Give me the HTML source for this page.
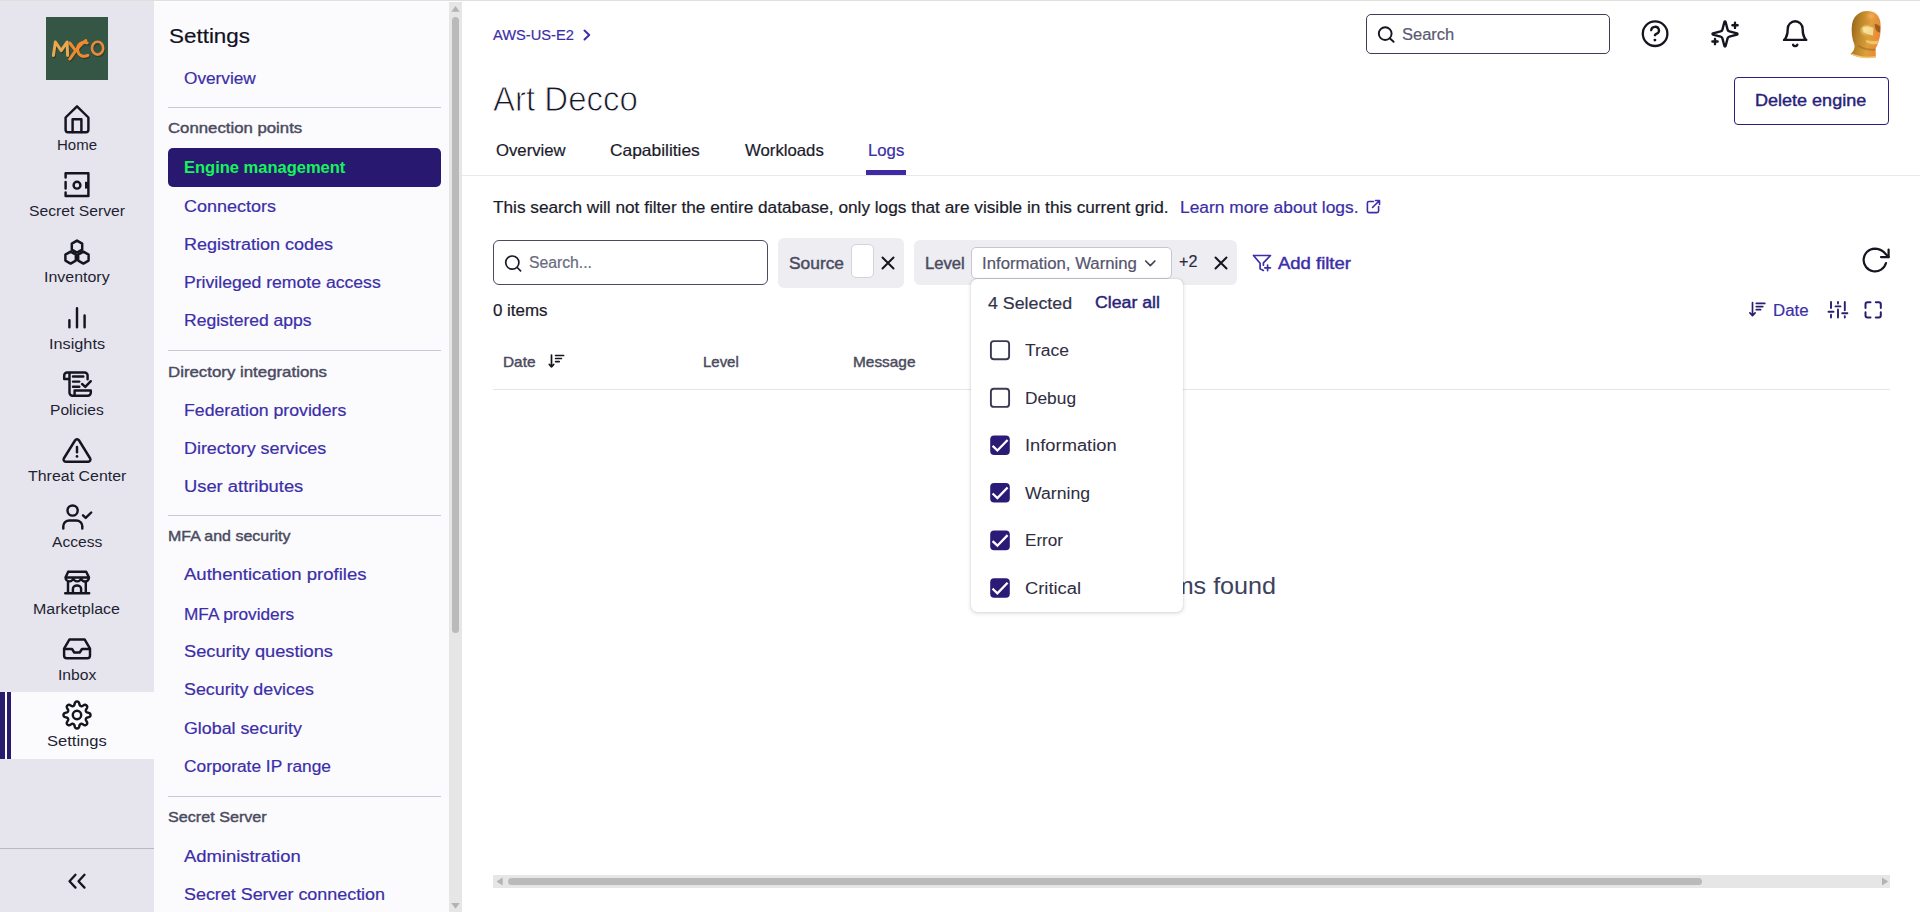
<!DOCTYPE html>
<html><head><meta charset="utf-8"><title>Art Decco - Logs</title>
<style>
html,body{margin:0;padding:0;width:1920px;height:912px;overflow:hidden;background:#fff;font-family:"Liberation Sans",sans-serif;}
.t{position:absolute;white-space:nowrap;line-height:1;transform-origin:0 0;}
.abs{position:absolute;}
</style></head><body>
<div class="abs" style="left:0;top:0;width:1920px;height:1px;background:#dee0dc"></div>
<!-- left rail -->
<div class="abs" style="left:0;top:1px;width:154px;height:911px;background:#e6e5ee"></div>
<div class="abs" style="left:0;top:692px;width:154px;height:66.5px;background:#fbfbfe"></div>
<div class="abs" style="left:0;top:692px;width:5px;height:66.5px;background:#2a1a6e"></div>
<div class="abs" style="left:7px;top:692px;width:4px;height:66.5px;background:#2a1a6e"></div>
<div class="abs" style="left:0;top:848px;width:154px;height:1px;background:#b9b9c2"></div>
<!-- logo -->
<div class="abs" style="left:46px;top:17px;width:62px;height:63px;background:#365645"></div>
<svg class="abs" style="left:0;top:0" width="154" height="912">
 <g fill="none" stroke-linecap="round" stroke-linejoin="round">
  <g stroke="#1c3326" opacity="0.55" transform="translate(0.8,1.4)">
   <path d="M53.4,55.4 L55.4,42 L61.2,50.6 L67.1,42 L67.6,55.4" stroke-width="3"/>
   <path d="M69.8,43 L75.2,50.2 M85.8,40.6 C80,44 74.5,52 69.8,59" stroke-width="3"/>
   <path d="M87.2,42.8 C81.5,40.5 77.2,45 77.6,50 C78,55.5 83.2,57.5 87.8,55.4" stroke-width="3"/>
   <ellipse cx="97.6" cy="48.2" rx="5.6" ry="6.4" stroke-width="2.6"/>
  </g>
  <path d="M53.4,55.4 L55.4,42 L61.2,50.6 L67.1,42 L67.6,55.4" stroke="#eaa94c" stroke-width="3"/>
  <path d="M69.8,43 L75.2,50.2 M85.8,40.6 C80,44 74.5,52 69.8,59" stroke="#f08a2e" stroke-width="3"/>
  <path d="M87.2,42.8 C81.5,40.5 77.2,45 77.6,50 C78,55.5 83.2,57.5 87.8,55.4" stroke="#f08a30" stroke-width="3"/>
  <ellipse cx="97.6" cy="48.2" rx="5.6" ry="6.4" stroke="#e9893a" stroke-width="2.6"/>
 </g>
 
<g fill="none" stroke="#15151f" stroke-width="2.45" stroke-linecap="round" stroke-linejoin="round">
 <path d="M65.6,117.5 L77,106.3 L88.4,117.5 V129.8 a2.4,2.4 0 0 1 -2.4,2.4 H68 a2.4,2.4 0 0 1 -2.4,-2.4 Z"/>
 <path d="M72.6,132 V119.2 H81.4 V132"/>
 <path d="M65.6,173.2 H88.4 V196 H65.6 M65.6,173.2 V177.5 M65.6,182 V188.5 M65.6,192.5 V196"/>
 <circle cx="77" cy="185.2" r="3.4"/>
 <path d="M86.6,181.8 V188.6" stroke-width="3.2" stroke-linecap="butt"/>
 <path d="M77.00,240.60 L82.20,243.60 L82.20,249.60 L77.00,252.60 L71.80,249.60 L71.80,243.60 Z"/><path d="M70.60,251.60 L75.80,254.60 L75.80,260.60 L70.60,263.60 L65.40,260.60 L65.40,254.60 Z"/><path d="M83.40,251.60 L88.60,254.60 L88.60,260.60 L83.40,263.60 L78.20,260.60 L78.20,254.60 Z"/>
 <path d="M69.4,320.2 V327.2 M77,308.2 V327.2 M84.6,315.5 V327.2"/>
 <path d="M64.2,379 V375.5 a3,3 0 0 1 3,-3 H84.6 a3,3 0 0 1 3,3 V379.2 M64.2,379 H69.5 M69.5,372.5 V392.8 a3,3 0 0 0 3,3 H87.8 a3,3 0 0 0 3,-3 V390.5 H74.6 V395.8"/>
 <path d="M73,376.5 H83.3 M73,381.6 H79.3 M73,386.7 H79.3"/>
 <path d="M82.1,384 L85.3,386.9 L90.8,381.2"/>
 <path d="M75,440.5 a2.4,2.4 0 0 1 4.1,0 L90.2,458.5 a2.2,2.2 0 0 1 -1.9,3.2 H65.7 a2.2,2.2 0 0 1 -1.9,-3.2 Z"/>
 <path d="M77,447 V452.2"/>
 <circle cx="77" cy="456.4" r="1.35" fill="#15151f" stroke="none"/>
 <circle cx="72.6" cy="510.5" r="5.1"/>
 <path d="M63.3,528.4 V526 a6,5.6 0 0 1 6,-5.6 H76.3 a6,5.6 0 0 1 6,5.6 V528.4"/>
 <path d="M83,515.3 L85.7,517.9 L91.2,512.5"/>
 <path d="M68.2,571.8 H86.2 L89,577.5 M68.2,571.8 L65.5,577.5 M65.5,577.5 H89 M65.5,577.5 a3.9,3.9 0 0 0 7.8,0 a3.9,3.9 0 0 0 7.8,0 a3.9,3.9 0 0 0 7.9,0"/>
 <path d="M68,582.5 V593 M85.8,582.5 V593 M65.2,593.2 H89.2 M72.9,593 V588.8 a4.1,3.4 0 0 1 8.2,0 V593"/>
 <path d="M69.5,639.4 H84.6 L90,648.6 V655.5 a2.8,2.8 0 0 1 -2.8,2.8 H66.9 a2.8,2.8 0 0 1 -2.8,-2.8 V648.6 Z"/>
 <path d="M64.3,649 H72 L74.3,652.5 H79.7 L82,649 H89.6"/>
 <path d="M77.00,701.50 L77.35,701.52 L77.70,701.59 L78.05,701.72 L78.37,701.93 L78.68,702.25 L78.95,702.71 L79.17,703.30 L79.35,703.94 L79.51,704.54 L79.68,705.01 L79.86,705.36 L80.05,705.61 L80.26,705.79 L80.48,705.93 L80.71,706.04 L80.95,706.12 L81.21,706.18 L81.48,706.20 L81.80,706.16 L82.17,706.05 L82.62,705.83 L83.16,705.52 L83.74,705.19 L84.31,704.94 L84.83,704.80 L85.27,704.78 L85.65,704.87 L85.99,705.02 L86.28,705.22 L86.55,705.45 L86.78,705.72 L86.98,706.01 L87.13,706.35 L87.22,706.73 L87.20,707.17 L87.06,707.69 L86.81,708.26 L86.48,708.84 L86.17,709.38 L85.95,709.83 L85.84,710.20 L85.80,710.52 L85.82,710.79 L85.88,711.05 L85.96,711.29 L86.07,711.52 L86.21,711.74 L86.39,711.95 L86.64,712.14 L86.99,712.32 L87.46,712.49 L88.06,712.65 L88.70,712.83 L89.29,713.05 L89.75,713.32 L90.07,713.63 L90.28,713.95 L90.41,714.30 L90.48,714.65 L90.50,715.00 L90.48,715.35 L90.41,715.70 L90.28,716.05 L90.07,716.37 L89.75,716.68 L89.29,716.95 L88.70,717.17 L88.06,717.35 L87.46,717.51 L86.99,717.68 L86.64,717.86 L86.39,718.05 L86.21,718.26 L86.07,718.48 L85.96,718.71 L85.88,718.95 L85.82,719.21 L85.80,719.48 L85.84,719.80 L85.95,720.17 L86.17,720.62 L86.48,721.16 L86.81,721.74 L87.06,722.31 L87.20,722.83 L87.22,723.27 L87.13,723.65 L86.98,723.99 L86.78,724.28 L86.55,724.55 L86.28,724.78 L85.99,724.98 L85.65,725.13 L85.27,725.22 L84.83,725.20 L84.31,725.06 L83.74,724.81 L83.16,724.48 L82.62,724.17 L82.17,723.95 L81.80,723.84 L81.48,723.80 L81.21,723.82 L80.95,723.88 L80.71,723.96 L80.48,724.07 L80.26,724.21 L80.05,724.39 L79.86,724.64 L79.68,724.99 L79.51,725.46 L79.35,726.06 L79.17,726.70 L78.95,727.29 L78.68,727.75 L78.37,728.07 L78.05,728.28 L77.70,728.41 L77.35,728.48 L77.00,728.50 L76.65,728.48 L76.30,728.41 L75.95,728.28 L75.63,728.07 L75.32,727.75 L75.05,727.29 L74.83,726.70 L74.65,726.06 L74.49,725.46 L74.32,724.99 L74.14,724.64 L73.95,724.39 L73.74,724.21 L73.52,724.07 L73.29,723.96 L73.05,723.88 L72.79,723.82 L72.52,723.80 L72.20,723.84 L71.83,723.95 L71.38,724.17 L70.84,724.48 L70.26,724.81 L69.69,725.06 L69.17,725.20 L68.73,725.22 L68.35,725.13 L68.01,724.98 L67.72,724.78 L67.45,724.55 L67.22,724.28 L67.02,723.99 L66.87,723.65 L66.78,723.27 L66.80,722.83 L66.94,722.31 L67.19,721.74 L67.52,721.16 L67.83,720.62 L68.05,720.17 L68.16,719.80 L68.20,719.48 L68.18,719.21 L68.12,718.95 L68.04,718.71 L67.93,718.48 L67.79,718.26 L67.61,718.05 L67.36,717.86 L67.01,717.68 L66.54,717.51 L65.94,717.35 L65.30,717.17 L64.71,716.95 L64.25,716.68 L63.93,716.37 L63.72,716.05 L63.59,715.70 L63.52,715.35 L63.50,715.00 L63.52,714.65 L63.59,714.30 L63.72,713.95 L63.93,713.63 L64.25,713.32 L64.71,713.05 L65.30,712.83 L65.94,712.65 L66.54,712.49 L67.01,712.32 L67.36,712.14 L67.61,711.95 L67.79,711.74 L67.93,711.52 L68.04,711.29 L68.12,711.05 L68.18,710.79 L68.20,710.52 L68.16,710.20 L68.05,709.83 L67.83,709.38 L67.52,708.84 L67.19,708.26 L66.94,707.69 L66.80,707.17 L66.78,706.73 L66.87,706.35 L67.02,706.01 L67.22,705.72 L67.45,705.45 L67.72,705.22 L68.01,705.02 L68.35,704.87 L68.73,704.78 L69.17,704.80 L69.69,704.94 L70.26,705.19 L70.84,705.52 L71.38,705.83 L71.83,706.05 L72.20,706.16 L72.52,706.20 L72.79,706.18 L73.05,706.12 L73.29,706.04 L73.52,705.93 L73.74,705.79 L73.95,705.61 L74.14,705.36 L74.32,705.01 L74.49,704.54 L74.65,703.94 L74.83,703.30 L75.05,702.71 L75.32,702.25 L75.63,701.93 L75.95,701.72 L76.30,701.59 L76.65,701.52 Z"/>
 <circle cx="77" cy="715" r="4.2"/>
 <path d="M75.5,874.8 L69.5,881.2 L75.5,887.6 M84.5,874.8 L78.5,881.2 L84.5,887.6" stroke-width="2.3"/>
</g>

</svg>
<!-- settings panel -->
<div class="abs" style="left:154px;top:2px;width:295px;height:910px;background:#fbfbfe"></div>
<div class="abs" style="left:168px;top:107px;width:273px;height:1.3px;background:#c9c8d4"></div>
<div class="abs" style="left:168px;top:350px;width:273px;height:1.3px;background:#c9c8d4"></div>
<div class="abs" style="left:168px;top:515px;width:273px;height:1.3px;background:#c9c8d4"></div>
<div class="abs" style="left:168px;top:796px;width:273px;height:1.3px;background:#c9c8d4"></div>
<div class="abs" style="left:168px;top:148px;width:273px;height:39px;background:#28186f;border-radius:5px"></div>
<!-- scrollbar -->
<div class="abs" style="left:449px;top:2px;width:13px;height:910px;background:#e6e6e6"></div>
<div class="abs" style="left:452px;top:17px;width:7px;height:616px;background:#bababa;border-radius:4px"></div>
<svg class="abs" style="left:0;top:0" width="470" height="912">
 <path d="M451.3,11.8 L455.5,5.9 L459.7,11.8 Z" fill="#b3b3b3"/>
 <path d="M451.3,903 L455.5,908.8 L459.7,903 Z" fill="#b3b3b3"/>
</svg>
<!-- main -->
<div class="abs" style="left:462px;top:175px;width:1458px;height:1.3px;background:#e7e7ec"></div>
<div class="abs" style="left:866px;top:170px;width:40px;height:5px;background:#3d2aa5"></div>
<div class="abs" style="left:1366px;top:14px;width:241.5px;height:37.5px;border:1.3px solid #3c3c58;border-radius:5px;background:#fff"></div>
<div class="abs" style="left:1734px;top:77px;width:152.6px;height:45.6px;border:1.3px solid #2a1f7a;border-radius:4px;background:#fff"></div>
<div class="abs" style="left:493px;top:240px;width:272.5px;height:42.5px;border:1.3px solid #4a4a62;border-radius:6px;background:#fff"></div>
<div class="abs" style="left:778px;top:238px;width:126px;height:50px;background:#ededf2;border-radius:6px"></div>
<div class="abs" style="left:851px;top:244px;width:20.5px;height:31.5px;background:#fff;border:1px solid #d3d3dc;border-radius:5px"></div>
<div class="abs" style="left:914px;top:240px;width:323px;height:45px;background:#ededf2;border-radius:6px"></div>
<div class="abs" style="left:971px;top:247px;width:199px;height:29.5px;background:#fff;border:1.2px solid #c6c6d0;border-radius:5px"></div>
<div class="abs" style="left:493px;top:389px;width:1397px;height:1.3px;background:#e5e5ea"></div>
<!-- h scrollbar -->
<div class="abs" style="left:493px;top:875px;width:1397px;height:13px;background:#e6e6e6"></div>
<div class="abs" style="left:508px;top:878px;width:1194px;height:7px;background:#bababa;border-radius:4px"></div>
<svg class="abs" style="left:0;top:0" width="1920" height="912">
 <path d="M502.7,877.5 L496.5,881.5 L502.7,885.5 Z" fill="#b3b3b3"/>
 <path d="M1882,877.5 L1888.2,881.5 L1882,885.5 Z" fill="#b3b3b3"/>
 
<g fill="none" stroke="#15151f" stroke-width="2.3" stroke-linecap="round" stroke-linejoin="round">
 <circle cx="1655.1" cy="33.7" r="12.3"/>
 <path d="M1651.2,30.2 a3.9,3.6 0 1 1 5.6,3.4 a3,3 0 0 0 -1.9,1.7"/>
 <circle cx="1654.9" cy="40.1" r="1.45" fill="#15151f" stroke="none"/>
 <g transform="translate(1710,19) scale(1.25)" stroke-width="1.9">
  <path d="M9.937 15.5A2 2 0 0 0 8.5 14.063l-6.135-1.582a.5.5 0 0 1 0-.962L8.5 9.936A2 2 0 0 0 9.937 8.5l1.582-6.135a.5.5 0 0 1 .963 0L14.063 8.5A2 2 0 0 0 15.5 9.937l6.135 1.581a.5.5 0 0 1 0 .964L15.5 14.063a2 2 0 0 0-1.437 1.437l-1.582 6.135a.5.5 0 0 1-.963 0z"/>
  <path d="M20 2.9v4.2M22.1 5h-4.2M4 15.9v4.2M6.1 18H1.9"/>
 </g>
 <g transform="translate(1780.3,18.8) scale(1.24)" stroke-width="1.9">
  <path d="M6 8a6 6 0 0 1 12 0c0 7 3 9 3 9H3s3-2 3-9"/>
  <path d="M10.3 21a1.94 1.94 0 0 0 3.4 0"/>
 </g>
 <circle cx="1385.2" cy="33.6" r="6.4" stroke-width="1.9"/>
 <path d="M1390,38.5 L1393.6,41.8" stroke-width="1.9"/>
</g>

 
<g fill="none" stroke-linecap="round" stroke-linejoin="round">
 <path d="M584.5,30.5 L589.2,35 L584.5,39.5" stroke="#3b2ea8" stroke-width="2"/>
 <g stroke="#3b2ea8" stroke-width="1.6">
  <path d="M1373.5,201.5 H1369 a1.6,1.6 0 0 0 -1.6,1.6 V211 a1.6,1.6 0 0 0 1.6,1.6 H1377 a1.6,1.6 0 0 0 1.6,-1.6 V206.5"/>
  <path d="M1372.5,207.5 L1379.5,200.5 M1375.5,200.5 H1379.5 V204.5"/>
 </g>
 <g stroke="#1a1a2a" stroke-width="1.7">
  <circle cx="512.3" cy="262.6" r="6.6"/>
  <path d="M517.2,267.5 L520.6,270.8"/>
 </g>
 <path d="M882.5,257.5 L893.5,268.5 M893.5,257.5 L882.5,268.5" stroke="#15151f" stroke-width="2"/>
 <path d="M1215.5,257.5 L1226.5,268.5 M1226.5,257.5 L1215.5,268.5" stroke="#15151f" stroke-width="2"/>
 <path d="M1145.7,261 L1150.3,265.6 L1154.9,261" stroke="#44445a" stroke-width="1.7"/>
 <g stroke="#3b2ea8" stroke-width="1.7">
  <path d="M1253.5,255.5 H1270.5 L1263.4,262.8 V265.2 M1253.5,255.5 L1260.1,263.2 V268.8 L1263.4,270.4"/>
  <path d="M1267.6,265 V270.6 M1264.8,267.8 H1270.4"/>
 </g>
 <g stroke="#15151f" stroke-width="2.2">
  <path d="M1886,263 A11.4,11.4 0 1 1 1874.7,248.6 C1878.2,248.6 1881.6,250 1884.2,252.4 L1888.6,257.1"/>
  <path d="M1888.6,249.5 V257.1 H1881"/>
 </g>
 <g stroke="#2a1f6e" stroke-width="1.7">
  <path d="M1752.5,302.5 V315.5 M1749.9,312.8 L1752.5,315.6 L1755.1,312.8"/>
  <path d="M1756.3,303.4 H1764.8 M1756.3,306.6 H1762.8 M1756.3,309.7 H1760.6"/>
  <path d="M1831,302 V308 M1831,314.8 V317.5 M1828.5,311.8 H1833.5 M1838,302 V303.5 M1838,309.4 V317.5 M1835.5,306.4 H1840.5 M1844.8,302 V310.3 M1844.8,316.2 V317.5 M1842.2,313.2 H1847.4" stroke-width="1.9"/>
  <path d="M1865.5,308 V304.3 a2,2 0 0 1 2,-2 H1870.5 M1875.8,302.3 H1878.8 a2,2 0 0 1 2,2 V308 M1880.8,312.3 V315.6 a2,2 0 0 1 -2,2 H1875.8 M1870.5,317.6 H1867.5 a2,2 0 0 1 -2,-2 V312.3" stroke-width="2"/>
 </g>
 <g stroke="#15151f" stroke-width="1.7">
  <path d="M551.5,355 V366.8 M549.3,364.5 L551.5,366.9 L553.7,364.5"/>
  <path d="M555.6,355.5 H563.6 M555.6,358.5 H561.4 M555.6,361.6 H559.2"/>
 </g>
</g>

 
<defs>
 <linearGradient id="goldx" x1="0" y1="0" x2="1" y2="0.25">
  <stop offset="0" stop-color="#8a5a18"/>
  <stop offset="0.35" stop-color="#b98428"/>
  <stop offset="0.7" stop-color="#dca03c"/>
  <stop offset="1" stop-color="#e98a38"/>
 </linearGradient>
 <radialGradient id="glow" cx="0.5" cy="0.5" r="0.5">
  <stop offset="0" stop-color="#ffb060" stop-opacity="0.9"/>
  <stop offset="1" stop-color="#f09040" stop-opacity="0"/>
 </radialGradient>
 <radialGradient id="face" cx="0.4" cy="0.4" r="0.6">
  <stop offset="0" stop-color="#fff2b0"/>
  <stop offset="1" stop-color="#e2b050" stop-opacity="0"/>
 </radialGradient>
</defs>
<path d="M1850.5,54 C1853.5,51.5 1855,48.5 1854.5,45 C1852,39 1851,31 1852,24.5 C1853.5,15.5 1860,11 1867,11 C1874,11 1879,14.5 1880.3,21.5 C1881,27 1880.8,35 1879,40 C1878.2,44 1876.5,47 1875.5,48.5 C1875.5,51.5 1876,54.5 1875.8,57.5 C1866,59 1857,57.5 1850.5,54 Z" fill="url(#goldx)"/>
<ellipse cx="1871" cy="16" rx="7" ry="6" fill="url(#glow)"/>
<ellipse cx="1867" cy="31" rx="7" ry="6.5" fill="url(#face)"/>
<path d="M1862.5,27.5 C1866,26 1870,26.5 1873.5,28 L1873,35.5 C1870,35 1866.5,34 1863.5,32 Z" fill="#f8e39a" opacity="0.85"/>
<path d="M1874.5,24 C1877,24 1879,25 1880.3,27 L1880,32.5 C1878,32.5 1876.5,31 1875.5,29 Z" fill="#6a3c0c" opacity="0.6"/>
<path d="M1866,40 C1870,41 1875,41.5 1878.5,40.5 L1877.8,44 C1873,45 1869,44 1866,42 Z" fill="#f5cf70" opacity="0.8"/>
<path d="M1858,45 C1864,48 1870,49.5 1876,48.5 L1875.8,50.5 C1869,51.5 1862,49.5 1858,46.5 Z" fill="#7a4c14" opacity="0.35"/>
<path d="M1852,53.5 C1858,56.5 1867,57.5 1875.8,56 L1875.8,57.8 C1866,59 1857,57.8 1850.5,54 Z" fill="#f0cc70"/>

</svg>
<div class="t" style="left:56.90px;top:136.98px;font-size:15.5px;letter-spacing:0.000px;color:#1f1f33;transform:scaleX(0.9674);-webkit-text-stroke:0px;">Home</div><div class="t" style="left:28.90px;top:203.23px;font-size:15.5px;letter-spacing:0.000px;color:#1f1f33;transform:scaleX(1.0132);-webkit-text-stroke:0px;">Secret Server</div><div class="t" style="left:44.10px;top:269.48px;font-size:15.5px;letter-spacing:0.000px;color:#1f1f33;transform:scaleX(1.0290);-webkit-text-stroke:0px;">Inventory</div><div class="t" style="left:48.90px;top:335.73px;font-size:15.5px;letter-spacing:0.000px;color:#1f1f33;transform:scaleX(1.0487);-webkit-text-stroke:0px;">Insights</div><div class="t" style="left:50.05px;top:401.98px;font-size:15.5px;letter-spacing:0.000px;color:#1f1f33;transform:scaleX(1.0056);-webkit-text-stroke:0px;">Policies</div><div class="t" style="left:27.70px;top:468.23px;font-size:15.5px;letter-spacing:0.000px;color:#1f1f33;transform:scaleX(1.0288);-webkit-text-stroke:0px;">Threat Center</div><div class="t" style="left:51.70px;top:534.48px;font-size:15.5px;letter-spacing:0.000px;color:#1f1f33;transform:scaleX(1.0090);-webkit-text-stroke:0px;">Access</div><div class="t" style="left:33.40px;top:600.73px;font-size:15.5px;letter-spacing:0.000px;color:#1f1f33;transform:scaleX(1.0302);-webkit-text-stroke:0px;">Marketplace</div><div class="t" style="left:57.70px;top:666.98px;font-size:15.5px;letter-spacing:0.000px;color:#1f1f33;transform:scaleX(1.0132);-webkit-text-stroke:0px;">Inbox</div><div class="t" style="left:47.00px;top:733.23px;font-size:15.5px;letter-spacing:0.000px;color:#1f1f33;transform:scaleX(1.0679);-webkit-text-stroke:0px;">Settings</div><div class="t" style="left:168.50px;top:25.85px;font-size:20.5px;letter-spacing:0.000px;color:#111122;transform:scaleX(1.0939);-webkit-text-stroke:0.2px currentColor;">Settings</div><div class="t" style="left:183.90px;top:70.76px;font-size:16px;letter-spacing:0.000px;color:#3b2ea8;transform:scaleX(1.0757);-webkit-text-stroke:0.2px currentColor;">Overview</div><div class="t" style="left:168.10px;top:120.30px;font-size:15px;letter-spacing:0.000px;color:#4b4b5e;transform:scaleX(1.1174);-webkit-text-stroke:0.42px currentColor;">Connection points</div><div class="t" style="left:183.50px;top:160.26px;font-size:16px;letter-spacing:0.000px;color:#16f45c;font-weight:700;transform:scaleX(1.0307);">Engine management</div><div class="t" style="left:183.60px;top:198.96px;font-size:16px;letter-spacing:0.000px;color:#3b2ea8;transform:scaleX(1.1247);-webkit-text-stroke:0.2px currentColor;">Connectors</div><div class="t" style="left:183.60px;top:236.86px;font-size:16px;letter-spacing:0.000px;color:#3b2ea8;transform:scaleX(1.1238);-webkit-text-stroke:0.2px currentColor;">Registration codes</div><div class="t" style="left:183.60px;top:274.96px;font-size:16px;letter-spacing:0.000px;color:#3b2ea8;transform:scaleX(1.1004);-webkit-text-stroke:0.2px currentColor;">Privileged remote access</div><div class="t" style="left:183.60px;top:312.96px;font-size:16px;letter-spacing:0.000px;color:#3b2ea8;transform:scaleX(1.0953);-webkit-text-stroke:0.2px currentColor;">Registered apps</div><div class="t" style="left:168.10px;top:363.80px;font-size:15px;letter-spacing:0.000px;color:#4b4b5e;transform:scaleX(1.1221);-webkit-text-stroke:0.42px currentColor;">Directory integrations</div><div class="t" style="left:183.60px;top:403.06px;font-size:16px;letter-spacing:0.000px;color:#3b2ea8;transform:scaleX(1.1060);-webkit-text-stroke:0.2px currentColor;">Federation providers</div><div class="t" style="left:183.60px;top:440.96px;font-size:16px;letter-spacing:0.000px;color:#3b2ea8;transform:scaleX(1.1192);-webkit-text-stroke:0.2px currentColor;">Directory services</div><div class="t" style="left:183.60px;top:478.76px;font-size:16px;letter-spacing:0.000px;color:#3b2ea8;transform:scaleX(1.1466);-webkit-text-stroke:0.2px currentColor;">User attributes</div><div class="t" style="left:168.10px;top:528.40px;font-size:15px;letter-spacing:0.000px;color:#4b4b5e;transform:scaleX(1.0639);-webkit-text-stroke:0.42px currentColor;">MFA and security</div><div class="t" style="left:183.60px;top:567.26px;font-size:16px;letter-spacing:0.000px;color:#3b2ea8;transform:scaleX(1.1591);-webkit-text-stroke:0.2px currentColor;">Authentication profiles</div><div class="t" style="left:183.60px;top:606.76px;font-size:16px;letter-spacing:0.000px;color:#3b2ea8;transform:scaleX(1.0758);-webkit-text-stroke:0.2px currentColor;">MFA providers</div><div class="t" style="left:183.60px;top:644.06px;font-size:16px;letter-spacing:0.000px;color:#3b2ea8;transform:scaleX(1.1396);-webkit-text-stroke:0.2px currentColor;">Security questions</div><div class="t" style="left:183.60px;top:682.46px;font-size:16px;letter-spacing:0.000px;color:#3b2ea8;transform:scaleX(1.1142);-webkit-text-stroke:0.2px currentColor;">Security devices</div><div class="t" style="left:183.60px;top:720.86px;font-size:16px;letter-spacing:0.000px;color:#3b2ea8;transform:scaleX(1.1134);-webkit-text-stroke:0.2px currentColor;">Global security</div><div class="t" style="left:183.60px;top:759.26px;font-size:16px;letter-spacing:0.000px;color:#3b2ea8;transform:scaleX(1.0825);-webkit-text-stroke:0.2px currentColor;">Corporate IP range</div><div class="t" style="left:168.10px;top:809.30px;font-size:15px;letter-spacing:0.000px;color:#4b4b5e;transform:scaleX(1.0763);-webkit-text-stroke:0.42px currentColor;">Secret Server</div><div class="t" style="left:183.60px;top:848.76px;font-size:16px;letter-spacing:0.000px;color:#3b2ea8;transform:scaleX(1.1509);-webkit-text-stroke:0.2px currentColor;">Administration</div><div class="t" style="left:183.60px;top:887.26px;font-size:16px;letter-spacing:0.000px;color:#3b2ea8;transform:scaleX(1.1188);-webkit-text-stroke:0.2px currentColor;">Secret Server connection</div><div class="t" style="left:493.10px;top:26.58px;font-size:15.5px;letter-spacing:0.000px;color:#3b2ea8;transform:scaleX(0.9456);-webkit-text-stroke:0.2px currentColor;">AWS-US-E2</div><div class="t" style="left:493.10px;top:82.26px;font-size:35.6px;letter-spacing:0.000px;color:#161626;transform:scaleX(0.9271);-webkit-text-stroke:0.9px #fff;">Art Decco</div><div class="t" style="left:495.50px;top:141.83px;font-size:16.5px;letter-spacing:0.000px;color:#1b1b2b;transform:scaleX(1.0123);-webkit-text-stroke:0.2px currentColor;">Overview</div><div class="t" style="left:609.80px;top:141.83px;font-size:16.5px;letter-spacing:0.000px;color:#1b1b2b;transform:scaleX(1.0528);-webkit-text-stroke:0.2px currentColor;">Capabilities</div><div class="t" style="left:744.50px;top:141.83px;font-size:16.5px;letter-spacing:0.000px;color:#1b1b2b;transform:scaleX(1.0148);-webkit-text-stroke:0.2px currentColor;">Workloads</div><div class="t" style="left:867.90px;top:141.83px;font-size:16.5px;letter-spacing:0.000px;color:#3b2ea8;transform:scaleX(1.0140);-webkit-text-stroke:0.2px currentColor;">Logs</div><div class="t" style="left:493.00px;top:199.66px;font-size:16px;letter-spacing:0.000px;color:#1b1b2b;transform:scaleX(1.0759);-webkit-text-stroke:0.2px currentColor;">This search will not filter the entire database, only logs that are visible in this current grid.</div><div class="t" style="left:1180.20px;top:200.36px;font-size:16px;letter-spacing:0.000px;color:#3b2ea8;transform:scaleX(1.0848);-webkit-text-stroke:0.2px currentColor;">Learn more about logs.</div><div class="t" style="left:529.00px;top:255.46px;font-size:16px;letter-spacing:0.000px;color:#6a6a80;transform:scaleX(0.9836);-webkit-text-stroke:0.2px currentColor;">Search...</div><div class="t" style="left:789.10px;top:256.36px;font-size:16px;letter-spacing:0.000px;color:#4b4b5e;transform:scaleX(1.0848);-webkit-text-stroke:0.42px currentColor;">Source</div><div class="t" style="left:924.70px;top:255.96px;font-size:16px;letter-spacing:0.000px;color:#4b4b5e;transform:scaleX(1.0405);-webkit-text-stroke:0.42px currentColor;">Level</div><div class="t" style="left:982.30px;top:255.56px;font-size:16px;letter-spacing:0.000px;color:#55556e;transform:scaleX(1.0473);-webkit-text-stroke:0.2px currentColor;">Information, Warning</div><div class="t" style="left:1179.30px;top:253.76px;font-size:16px;letter-spacing:0.000px;color:#2b2b3e;transform:scaleX(1.0082);-webkit-text-stroke:0.2px currentColor;">+2</div><div class="t" style="left:1277.60px;top:256.46px;font-size:16px;letter-spacing:0.000px;color:#3b2ea8;transform:scaleX(1.1544);-webkit-text-stroke:0.42px currentColor;">Add filter</div><div class="t" style="left:493.00px;top:302.96px;font-size:16px;letter-spacing:0.000px;color:#1b1b2b;transform:scaleX(1.0572);-webkit-text-stroke:0.2px currentColor;">0 items</div><div class="t" style="left:503.05px;top:355.23px;font-size:14.5px;letter-spacing:0.000px;color:#4b4b5e;transform:scaleX(1.0604);-webkit-text-stroke:0.42px currentColor;">Date</div><div class="t" style="left:703.05px;top:355.23px;font-size:14.5px;letter-spacing:0.000px;color:#4b4b5e;transform:scaleX(1.0317);-webkit-text-stroke:0.42px currentColor;">Level</div><div class="t" style="left:853.05px;top:355.23px;font-size:14.5px;letter-spacing:0.000px;color:#4b4b5e;transform:scaleX(1.0620);-webkit-text-stroke:0.42px currentColor;">Message</div><div class="t" style="left:1773.30px;top:302.76px;font-size:16px;letter-spacing:0.000px;color:#3b2ea8;transform:scaleX(1.0503);-webkit-text-stroke:0.2px currentColor;">Date</div><div class="t" style="left:1107.10px;top:573.93px;font-size:24px;letter-spacing:0.000px;color:#3d4260;transform:scaleX(1.0471);-webkit-text-stroke:0.05px currentColor;">No items found</div><div class="t" style="left:1401.80px;top:27.16px;font-size:16px;letter-spacing:0.000px;color:#5a5a72;transform:scaleX(1.0316);-webkit-text-stroke:0.2px currentColor;">Search</div><div class="t" style="left:1755.30px;top:93.06px;font-size:16px;letter-spacing:0.000px;color:#2a1f7a;transform:scaleX(1.1261);-webkit-text-stroke:0.42px currentColor;">Delete engine</div>
<!-- dropdown -->
<div class="abs" style="left:971px;top:279px;width:212px;height:333px;background:#fff;border-radius:6px;box-shadow:0 1px 4px rgba(30,30,60,0.18), 0 0 1px rgba(30,30,60,0.25)"></div>
<svg class="abs" style="left:0;top:0" width="1920" height="912"><rect x="990.9" y="341.10" width="18.2" height="18.2" rx="3" fill="#fff" stroke="#3a3a50" stroke-width="1.9"/><rect x="990.9" y="388.70" width="18.2" height="18.2" rx="3" fill="#fff" stroke="#3a3a50" stroke-width="1.9"/><rect x="990.2" y="435.40" width="19.6" height="19.6" rx="4" fill="#2b1b76"/><path d="M993.4,446.70 L997.4,450.50 L1006.8,440.80" fill="none" stroke="#fff" stroke-width="2.3" stroke-linecap="square" stroke-linejoin="miter"/><rect x="990.2" y="483.00" width="19.6" height="19.6" rx="4" fill="#2b1b76"/><path d="M993.4,494.30 L997.4,498.10 L1006.8,488.40" fill="none" stroke="#fff" stroke-width="2.3" stroke-linecap="square" stroke-linejoin="miter"/><rect x="990.2" y="530.60" width="19.6" height="19.6" rx="4" fill="#2b1b76"/><path d="M993.4,541.90 L997.4,545.70 L1006.8,536.00" fill="none" stroke="#fff" stroke-width="2.3" stroke-linecap="square" stroke-linejoin="miter"/><rect x="990.2" y="578.20" width="19.6" height="19.6" rx="4" fill="#2b1b76"/><path d="M993.4,589.50 L997.4,593.30 L1006.8,583.60" fill="none" stroke="#fff" stroke-width="2.3" stroke-linecap="square" stroke-linejoin="miter"/></svg>
<div class="t" style="left:988.40px;top:295.76px;font-size:16px;letter-spacing:0.000px;color:#33334a;transform:scaleX(1.1124);-webkit-text-stroke:0.2px currentColor;">4 Selected</div><div class="t" style="left:1095.20px;top:294.86px;font-size:16px;letter-spacing:0.000px;color:#2a1f7a;transform:scaleX(1.1073);-webkit-text-stroke:0.42px currentColor;">Clear all</div><div class="t" style="left:1025.30px;top:343.36px;font-size:16px;letter-spacing:0.000px;color:#2e2e42;transform:scaleX(1.0918);-webkit-text-stroke:0.05px currentColor;">Trace</div><div class="t" style="left:1025.30px;top:390.86px;font-size:16px;letter-spacing:0.000px;color:#2e2e42;transform:scaleX(1.0817);-webkit-text-stroke:0.05px currentColor;">Debug</div><div class="t" style="left:1025.30px;top:438.36px;font-size:16px;letter-spacing:0.000px;color:#2e2e42;transform:scaleX(1.1443);-webkit-text-stroke:0.05px currentColor;">Information</div><div class="t" style="left:1025.30px;top:485.86px;font-size:16px;letter-spacing:0.000px;color:#2e2e42;transform:scaleX(1.1017);-webkit-text-stroke:0.05px currentColor;">Warning</div><div class="t" style="left:1025.30px;top:533.36px;font-size:16px;letter-spacing:0.000px;color:#2e2e42;transform:scaleX(1.0689);-webkit-text-stroke:0.05px currentColor;">Error</div><div class="t" style="left:1025.30px;top:580.86px;font-size:16px;letter-spacing:0.000px;color:#2e2e42;transform:scaleX(1.1452);-webkit-text-stroke:0.05px currentColor;">Critical</div>
</body></html>
